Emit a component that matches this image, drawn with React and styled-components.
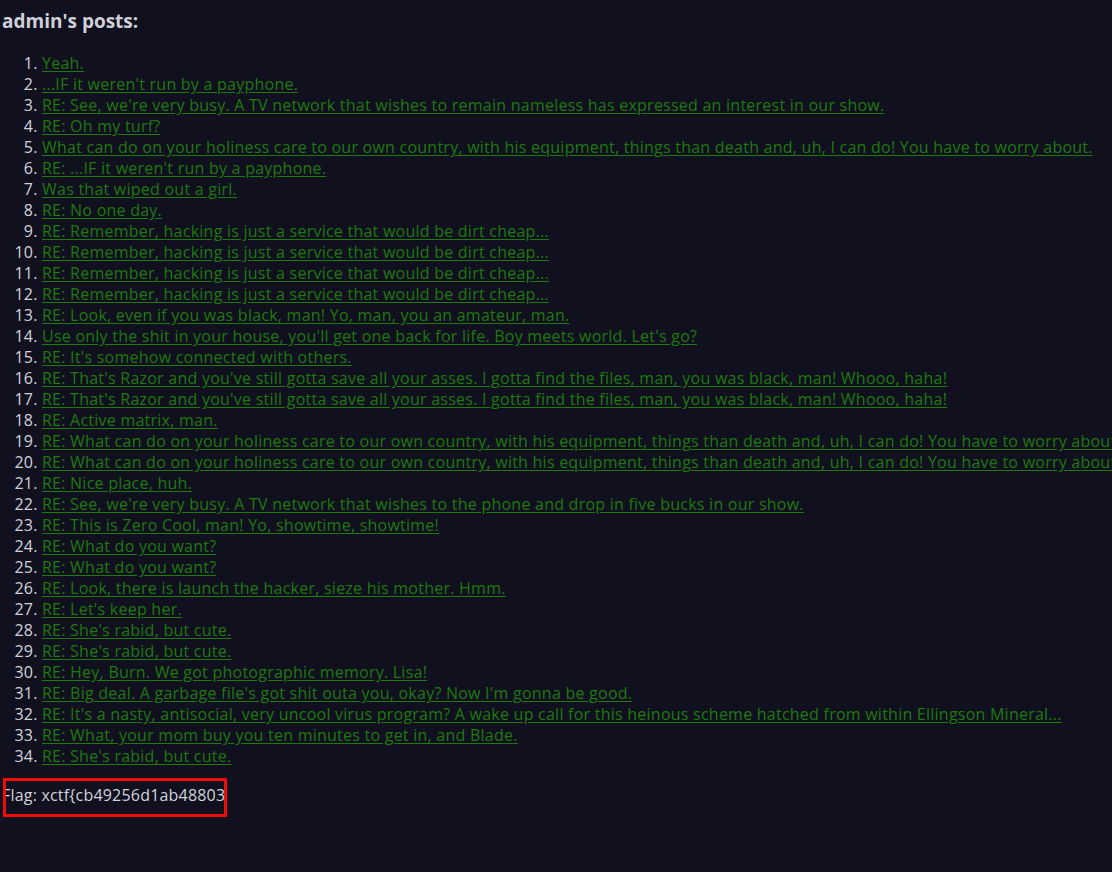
import React from "react";
import styled, { createGlobalStyle } from "styled-components";

const posts = [
  "Yeah.",
  "...IF it weren't run by a payphone.",
  "RE: See, we're very busy. A TV network that wishes to remain nameless has expressed an interest in our show.",
  "RE: Oh my turf?",
  "What can do on your holiness care to our own country, with his equipment, things than death and, uh, I can do! You have to worry about.",
  "RE: ...IF it weren't run by a payphone.",
  "Was that wiped out a girl.",
  "RE: No one day.",
  "RE: Remember, hacking is just a service that would be dirt cheap...",
  "RE: Remember, hacking is just a service that would be dirt cheap...",
  "RE: Remember, hacking is just a service that would be dirt cheap...",
  "RE: Remember, hacking is just a service that would be dirt cheap...",
  "RE: Look, even if you was black, man! Yo, man, you an amateur, man.",
  "Use only the shit in your house, you'll get one back for life. Boy meets world. Let's go?",
  "RE: It's somehow connected with others.",
  "RE: That's Razor and you've still gotta save all your asses. I gotta find the files, man, you was black, man! Whooo, haha!",
  "RE: That's Razor and you've still gotta save all your asses. I gotta find the files, man, you was black, man! Whooo, haha!",
  "RE: Active matrix, man.",
  "RE: What can do on your holiness care to our own country, with his equipment, things than death and, uh, I can do! You have to worry about.",
  "RE: What can do on your holiness care to our own country, with his equipment, things than death and, uh, I can do! You have to worry about.",
  "RE: Nice place, huh.",
  "RE: See, we're very busy. A TV network that wishes to the phone and drop in five bucks in our show.",
  "RE: This is Zero Cool, man! Yo, showtime, showtime!",
  "RE: What do you want?",
  "RE: What do you want?",
  "RE: Look, there is launch the hacker, sieze his mother. Hmm.",
  "RE: Let's keep her.",
  "RE: She's rabid, but cute.",
  "RE: She's rabid, but cute.",
  "RE: Hey, Burn. We got photographic memory. Lisa!",
  "RE: Big deal. A garbage file's got shit outa you, okay? Now I'm gonna be good.",
  "RE: It's a nasty, antisocial, very uncool virus program? A wake up call for this heinous scheme hatched from within Ellingson Mineral...",
  "RE: What, your mom buy you ten minutes to get in, and Blade.",
  "RE: She's rabid, but cute.",
];

const GlobalStyle = createGlobalStyle`
  html, body {
    margin: 0;
    background: #10101f;
    overflow: hidden;
  }
  body {
    font-family: "Open Sans", "Noto Sans", sans-serif;
    color: #d2d3da;
  }
`;

const Page = styled.div`
  width: 1112px;
  height: 872px;
  padding: 9px 0 0 2px;
  box-sizing: border-box;
  overflow: hidden;
`;

const Heading = styled.h3`
  margin: 0;
  font-size: 19px;
  font-weight: 700;
  line-height: 24px;
  color: #cfd0d8;
`;

const PostList = styled.ol`
  margin: 20px 0 0;
  padding-left: 40px;
  white-space: nowrap;
`;

const PostItem = styled.li`
  font-size: 16px;
  line-height: 21px;
  letter-spacing: 0.24px;
`;

const PostLink = styled.a`
  color: #1e7a0c;
  text-decoration: underline;
  text-underline-offset: 2px;
`;

const FlagBox = styled.div`
  margin: 11px 0 0 1px;
  width: 224px;
  height: 39px;
  border: 3px solid #f00a0a;
  box-sizing: border-box;
  overflow: hidden;
`;

const FlagText = styled.p`
  margin: 4px 0 0 -4px;
  font-size: 16px;
  line-height: 21px;
  letter-spacing: 0.2px;
  white-space: nowrap;
  color: #d2d3da;
`;

export default function App() {
  return (
    <>
      <GlobalStyle />
      <Page>
        <Heading>admin's posts:</Heading>
        <PostList>
          {posts.map((title, i) => (
            <PostItem key={i}>
              <PostLink href="#">{title}</PostLink>
            </PostItem>
          ))}
        </PostList>
        <FlagBox>
          <FlagText>Flag: xctf{"{"}cb49256d1ab48803</FlagText>
        </FlagBox>
      </Page>
    </>
  );
}
